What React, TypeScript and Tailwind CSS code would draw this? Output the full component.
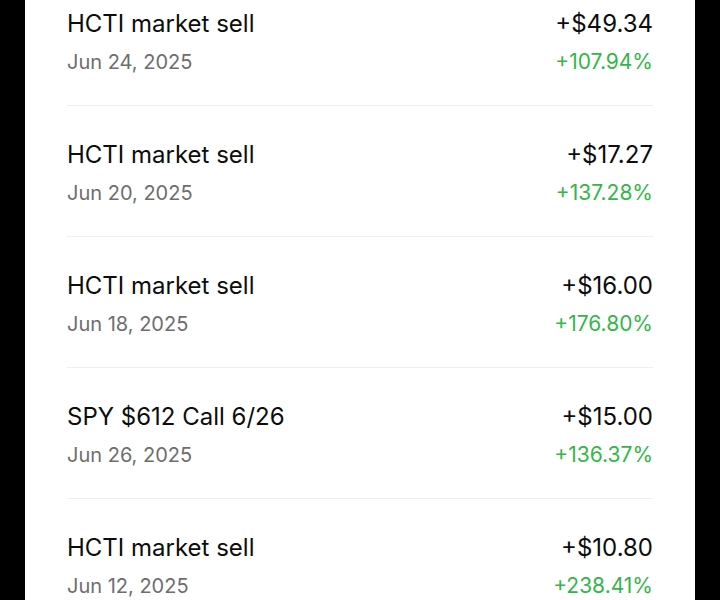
const trades = [
  { title: "HCTI market sell", date: "Jun 24, 2025", amount: "+$49.34", pct: "+107.94%" },
  { title: "HCTI market sell", date: "Jun 20, 2025", amount: "+$17.27", pct: "+137.28%" },
  { title: "HCTI market sell", date: "Jun 18, 2025", amount: "+$16.00", pct: "+176.80%" },
  { title: "SPY $612 Call 6/26", date: "Jun 26, 2025", amount: "+$15.00", pct: "+136.37%" },
  { title: "HCTI market sell", date: "Jun 12, 2025", amount: "+$10.80", pct: "+238.41%" },
];

export default function App() {
  return (
    <div className="flex h-[600px] w-[720px] overflow-hidden bg-black">
      <div className="ml-[25px] w-[670px] bg-white px-[42px] font-['Inter',sans-serif]">
        <ul className="mt-[-25px]">
          {trades.map((t, i) => (
            <li
              key={i}
              className="flex items-start justify-between border-b border-[#efefef] pb-[28px] pt-[34px]"
            >
              <div className="flex flex-col gap-[8px]">
                <span className="text-[24px] leading-[30px] text-[#0d0d0d]">{t.title}</span>
                <span className="text-[20px] leading-[30px] text-[#6e6e6e]">{t.date}</span>
              </div>
              <div className="flex flex-col items-end gap-[8px]">
                <span className="text-[24px] leading-[30px] text-[#0d0d0d]">{t.amount}</span>
                <span className="text-[21px] leading-[30px] text-[#34b64a]">{t.pct}</span>
              </div>
            </li>
          ))}
        </ul>
      </div>
    </div>
  );
}
